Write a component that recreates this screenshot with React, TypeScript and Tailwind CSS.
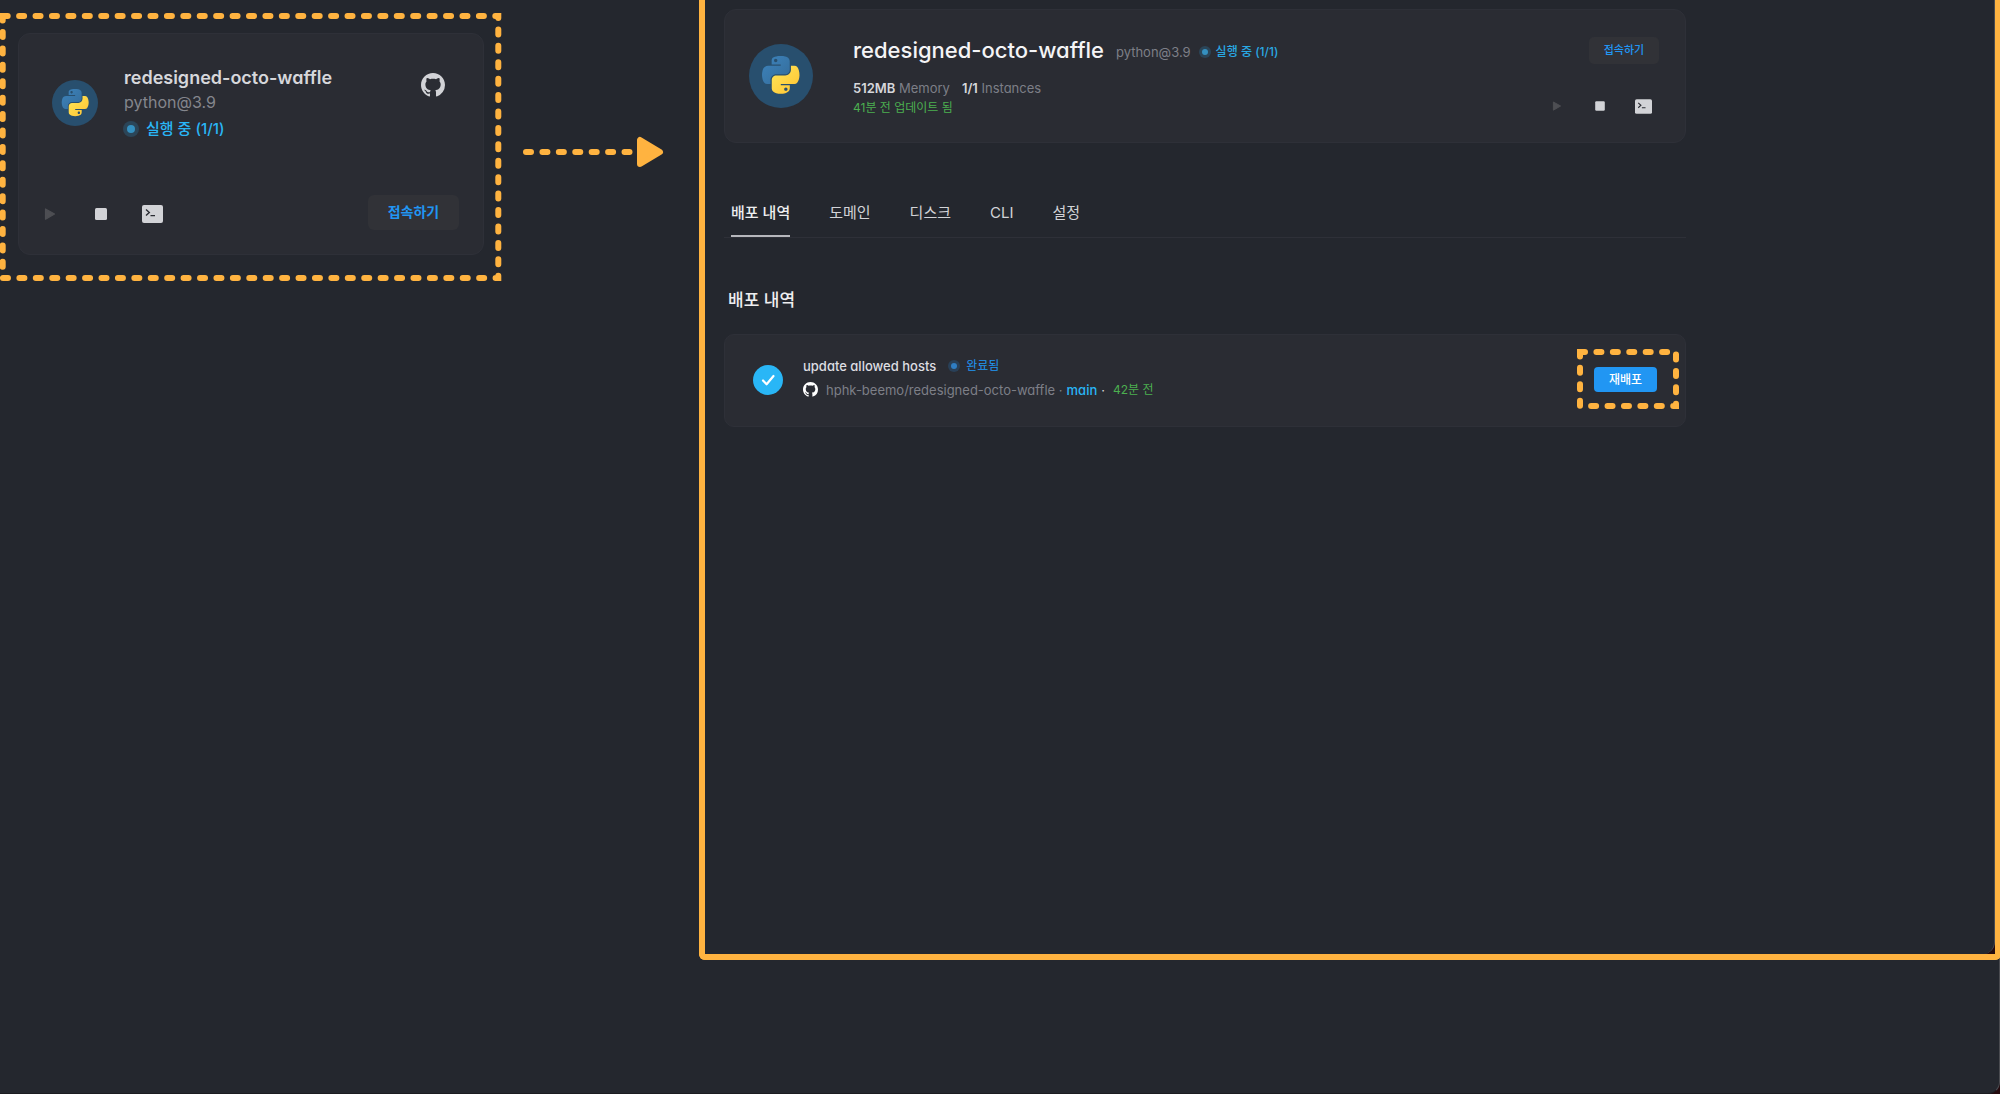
import React from "react";

const ORANGE = "#ffb340";

function PythonBadge({ className }: { className: string }) {
  return (
    <div className={`flex shrink-0 items-center justify-center rounded-full bg-[#284f6e] ${className}`}>
      <svg viewBox="0 0 110 110" className="h-[62%] w-[62%]" aria-label="Python" role="img">
        <defs>
          <linearGradient id="pyBlue" x1="0" y1="0" x2="0.8" y2="0.8">
            <stop offset="0" stopColor="#3d84bd" />
            <stop offset="1" stopColor="#3670a0" />
          </linearGradient>
          <linearGradient id="pyYellow" x1="0.2" y1="0.2" x2="1" y2="1">
            <stop offset="0" stopColor="#ffe052" />
            <stop offset="1" stopColor="#ffc331" />
          </linearGradient>
        </defs>
        <path
          fill="url(#pyBlue)"
          d="M54.3 0C50 .02 45.700 .4 42.100 1.050 31.500 2.920 29.600 6.840 29.600 14.060v9.540h25.030v3.180H20.200c-7.270 0-13.640 4.370-15.640 12.690-2.300 9.530-2.400 15.480 0 25.430 1.780 7.410 6.030 12.690 13.300 12.690h8.610V66.150c0-8.270 7.150-15.560 15.640-15.560h25c6.960 0 12.510-5.730 12.510-12.720V14.060c0-6.780-5.720-11.880-12.510-13.010C62.800.340 58.350-.020 54.300 0zM40.800 7.660c2.590 0 4.700 2.150 4.700 4.780 0 2.630-2.110 4.760-4.700 4.760-2.600 0-4.700-2.130-4.700-4.760 0-2.640 2.100-4.780 4.700-4.780z"
        />
        <path
          fill="url(#pyYellow)"
          d="M83 26.780v11.130c0 8.630-7.320 15.890-15.660 15.890h-25c-6.850 0-12.510 5.860-12.510 12.720v23.830c0 6.780 5.900 10.770 12.510 12.720 7.920 2.330 15.510 2.750 25 0 6.300-1.830 12.510-5.500 12.510-12.720v-9.540H54.860v-3.180h37.510c7.270 0 9.980-5.070 12.510-12.680 2.610-7.840 2.500-15.380 0-25.440-1.800-7.240-5.230-12.690-12.510-12.690zM68.950 87.130c2.590 0 4.700 2.130 4.700 4.760 0 2.640-2.110 4.780-4.700 4.780s-4.700-2.140-4.700-4.780c0-2.630 2.110-4.760 4.700-4.760z"
        />
      </svg>
    </div>
  );
}

function GithubMark({ className }: { className: string }) {
  return (
    <svg viewBox="0 0 16 16" className={className} fill="currentColor" aria-hidden="true">
      <path d="M8 0C3.580 0 0 3.580 0 8c0 3.540 2.290 6.530 5.470 7.590.4.070.55-.17.55-.38 0-.19-.010-.82-.010-1.490-2.010.37-2.530-.49-2.690-.94-.09-.23-.48-.94-.82-1.130-.28-.15-.68-.52-.010-.53.63-.010 1.080.58 1.230.82.72 1.210 1.870.87 2.330.66.070-.52.28-.87.51-1.070-1.780-.2-3.640-.89-3.640-3.950 0-.87.31-1.590.82-2.150-.08-.2-.36-1.020.08-2.120 0 0 .67-.21 2.200.82.64-.18 1.320-.27 2-.27s1.360.09 2 .27c1.530-1.040 2.200-.82 2.200-.82.44 1.100.16 1.920.08 2.120.51.56.82 1.270.82 2.150 0 3.070-1.870 3.750-3.650 3.950.29.25.54.73.54 1.480 0 1.070-.010 1.930-.010 2.200 0 .21.15.46.55.38A8.010 8.010 0 0 0 16 8c0-4.420-3.580-8-8-8z" />
    </svg>
  );
}

function PlayIcon({ className }: { className: string }) {
  return (
    <svg viewBox="0 0 20 20" className={className} aria-hidden="true">
      <path d="M5.500 5v10.200L14.500 10z" fill="#4d4e53" stroke="#4d4e53" strokeWidth="1.200" strokeLinejoin="round" />
    </svg>
  );
}

function StopIcon({ className }: { className: string }) {
  return (
    <svg viewBox="0 0 20 20" className={className} aria-hidden="true">
      <rect x="4" y="4" width="12" height="12" rx="1.500" fill="#d2d3d7" />
    </svg>
  );
}

function TerminalIcon({ className }: { className: string }) {
  return (
    <svg viewBox="0 0 21 18" className={className} aria-hidden="true">
      <rect width="21" height="18" rx="2" fill="#d2d3d7" />
      <path d="M4 4.500l3.300 3L4 10.500M8.500 10.600h4.500" fill="none" stroke="#2a2c33" strokeWidth="1.400" />
    </svg>
  );
}

function StatusDot({ outer, inner }: { outer: string; inner: string }) {
  return (
    <span className={`flex shrink-0 items-center justify-center rounded-full ${outer}`}>
      <span className={`rounded-full ${inner}`} />
    </span>
  );
}

function AppSummaryCard() {
  return (
    <section className="relative w-[501px] shrink-0 pt-[33px] pr-[17px] pb-[26px] pl-[18px]">
      <svg className="pointer-events-none absolute top-[13px] left-0 h-[268px] w-[502px]" aria-hidden="true">
        <rect x="2.700" y="3" width="495.600" height="262" fill="none" stroke={ORANGE} strokeWidth="6" strokeLinecap="round" strokeDasharray="5 11.420" />
      </svg>
      <div className="flex h-[222px] flex-col justify-between rounded-xl border border-[#2e3038] bg-[#2a2c33] pt-[30px] pr-6 pb-6 pl-[18px]">
        <div className="flex items-start">
          <PythonBadge className="mt-4 ml-[15px] h-[46px] w-[46px]" />
          <div className="ml-[26px] flex-1">
            <h2 className="text-lg leading-7 font-semibold text-[#d6d7db]">redesigned-octo-waffle</h2>
            <p className="text-base leading-5 text-[#84868d]">python@3.9</p>
            <p className="mt-[5px] flex items-center text-[15px] leading-6 font-medium text-[#29b6f6]">
              <StatusDot outer="-ml-px h-4 w-4 bg-[#2b4558]" inner="h-2 w-2 bg-[#3590c0]" />
              <span className="ml-[7px]">실행 중 (1/1)</span>
            </p>
          </div>
          <a href="#github" aria-label="GitHub" className="mt-[9px] mr-[14px] text-[#d2d3d7]">
            <GithubMark className="h-6 w-6" />
          </a>
        </div>
        <div className="flex items-center">
          <div className="mt-[3px] flex items-center gap-[31px]">
            <button aria-label="시작" className="ml-[3px]"><PlayIcon className="h-5 w-5" /></button>
            <button aria-label="중지"><StopIcon className="h-5 w-5" /></button>
            <button aria-label="터미널"><TerminalIcon className="h-[18px] w-[21px]" /></button>
          </div>
          <button className="ml-auto h-[35px] w-[91px] rounded-md bg-[#313237] pb-0.5 text-sm font-semibold text-[#2196f3]">접속하기</button>
        </div>
      </div>
    </section>
  );
}

function FlowArrow() {
  return (
    <svg viewBox="0 0 142 32" className="mt-[136px] ml-[22px] h-8 w-[142px] shrink-0" aria-hidden="true">
      <path d="M3 16H110" stroke={ORANGE} strokeWidth="6" strokeLinecap="round" strokeDasharray="5 11.420" />
      <path d="M117 4v24L137 16z" fill={ORANGE} stroke={ORANGE} strokeWidth="6" strokeLinejoin="round" />
    </svg>
  );
}

const TABS = ["배포 내역", "도메인", "디스크", "CLI", "설정"];

function AppHeader() {
  return (
    <header className="flex h-[134px] items-start rounded-xl border border-[#2e3038] bg-[#2a2c33] pt-[22px] pr-[26px] pl-6">
      <PythonBadge className="mt-3 h-16 w-16" />
      <div className="ml-10 pt-0.5">
        <div className="flex items-center">
          <h1 className="text-[22px] leading-8 font-medium text-[#f4f4f6]">redesigned-octo-waffle</h1>
          <span className="ml-3 pt-1 text-[13px] leading-7 text-[#7d7f87]">python@3.9</span>
          <StatusDot outer="mt-1 ml-2 h-3 w-3 bg-[#2b4558]" inner="h-1.5 w-1.5 bg-[#3590c0]" />
          <span className="ml-[5px] pt-1 text-xs leading-7 font-medium text-[#29a9e4]">실행 중 (1/1)</span>
        </div>
        <p className="mt-3 flex gap-3 text-[13px] leading-5 text-[#7d7f87]">
          <span><b className="font-semibold text-[#d6d7db]">512MB</b> Memory</span>
          <span><b className="font-semibold text-[#d6d7db]">1/1</b> Instances</span>
        </p>
        <p className="text-xs leading-5 text-[#4caf50]">41분 전 업데이트 됨</p>
      </div>
      <div className="ml-auto flex flex-col items-end">
        <button className="mt-[5px] h-[27px] w-[70px] rounded-[5px] bg-[#313237] text-[11px] font-medium text-[#2196f3]">접속하기</button>
        <div className="mt-[34px] mr-[7px] flex items-center gap-[27px]">
          <button aria-label="시작"><PlayIcon className="h-4 w-4" /></button>
          <button aria-label="중지"><StopIcon className="h-4 w-4" /></button>
          <button aria-label="터미널"><TerminalIcon className="h-[15px] w-[17px]" /></button>
        </div>
      </div>
    </header>
  );
}

function DeploymentRow() {
  return (
    <article className="flex h-[93px] items-center rounded-[10px] border border-[#2e3038] bg-[#2a2c33] pr-7 pb-0.5 pl-7">
      <span className="flex h-[30px] w-[30px] items-center justify-center rounded-full bg-[#29b6f6]">
        <svg viewBox="0 0 30 30" className="h-[30px] w-[30px]" aria-hidden="true">
          <path d="M10 15.500l3.600 3.800L20.500 11" fill="none" stroke="#fff" strokeWidth="2.200" strokeLinecap="round" strokeLinejoin="round" />
        </svg>
      </span>
      <div className="ml-5 pb-1">
        <div className="flex items-center leading-6">
          <h3 className="text-[13px] font-medium text-[#dddee2]">update allowed hosts</h3>
          <StatusDot outer="ml-3 h-3 w-3 bg-[#294058]" inner="h-1.5 w-1.5 bg-[#2f7ec4]" />
          <span className="ml-[6px] text-xs leading-6 text-[#2196f3]">완료됨</span>
        </div>
        <p className="flex items-center text-[13px] leading-6 text-[#7d7f87]">
          <GithubMark className="mr-2 h-[15px] w-[15px] text-white" />
          <span>hphk-beemo/redesigned-octo-waffle ·</span>
          <a href="#main" className="ml-1 font-medium text-[#29b6f6]">main</a>
          <span className="ml-1 text-[#d6d7db]">·</span>
          <span className="ml-2 text-xs leading-6 text-[#4caf50]">42분 전</span>
        </p>
      </div>
      <div className="relative ml-auto">
        <button className="block h-[25px] w-[63px] rounded bg-[#2196f3] text-xs font-medium text-white">재배포</button>
        <svg className="pointer-events-none absolute -top-[18px] -left-[17px] h-[60px] w-[102px]" aria-hidden="true">
          <rect x="3" y="3" width="96" height="54" fill="none" stroke={ORANGE} strokeWidth="6" strokeLinecap="round" strokeDasharray="5 11.420" />
        </svg>
      </div>
    </article>
  );
}

export default function App() {
  return (
    <div className="h-screen overflow-hidden bg-[#240a0e] font-[Inter,'Noto_Sans_CJK_KR',sans-serif] [font-feature-settings:'cv11']">
      <div className="flex h-full items-start rounded-br-xl border-r border-b border-r-[#4a4b50] border-b-[#1b1c21] bg-[#24272e]">
        <AppSummaryCard />
        <FlowArrow />
        <main className="-mr-0.5 ml-[34px] h-[960px] min-w-0 flex-1 rounded-b-md border-x-6 border-b-6 border-[#ffb340] bg-[#240a0e]">
          <div className="h-full rounded-br-xl border-r border-[#4a4b50] bg-[#24272e] pt-[9px] pl-[19px]">
            <div className="max-w-[962px]">
              <AppHeader />
              <nav className="mt-[50px] flex h-[45px] gap-[39px] border-b border-[#2e3038] pl-[7px]" aria-label="앱 메뉴">
                {TABS.map((tab, i) => (
                  <a
                    key={tab}
                    href={"#tab-" + i}
                    className={`pt-1 text-[15px] leading-8 ${i === 0 ? "border-b-2 border-[#b6b7bc] font-medium text-[#eeeef0]" : "text-[#d2d3d7]"}`}
                  >
                    {tab}
                  </a>
                ))}
              </nav>
              <h2 className="mt-[46px] pl-1 text-[17px] leading-8 font-medium text-[#eeeef0]">배포 내역</h2>
              <div className="mt-[18px]">
                <DeploymentRow />
              </div>
            </div>
          </div>
        </main>
      </div>
    </div>
  );
}
